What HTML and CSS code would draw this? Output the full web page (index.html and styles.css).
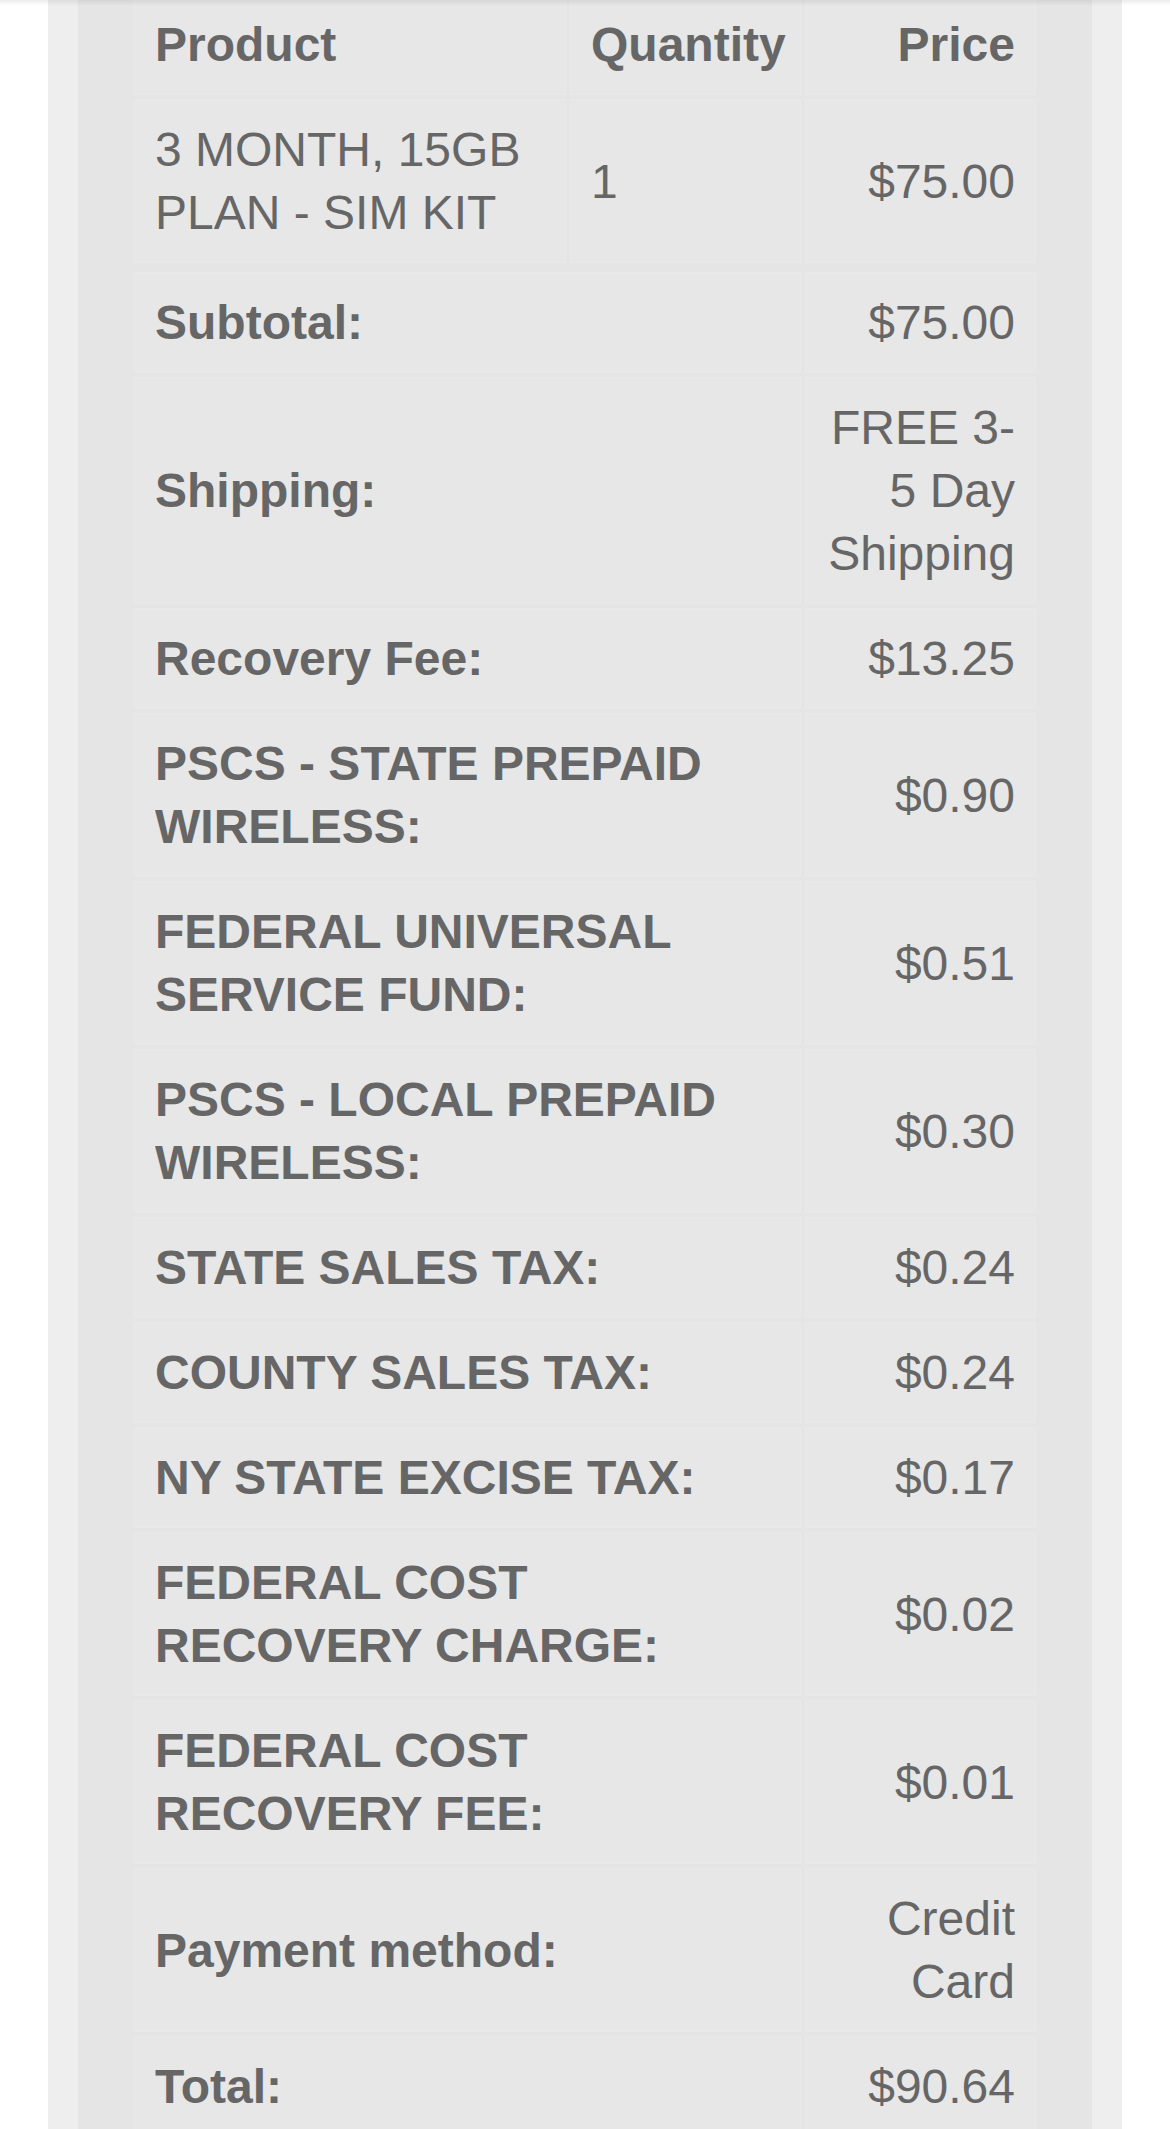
FILE: index.html
```html
<!DOCTYPE html>
<html lang="en">
<head>
    <meta charset="UTF-8">
    <meta name="viewport" content="width=device-width, initial-scale=1.0">
    <title>Order details</title>
    <link rel="stylesheet" href="styles.css">
</head>
<body>
    <!-- order details box -->
    <div class="order-box">
        <div class="order-inner">
            <table class="order-items">
                <thead>
                    <tr>
                        <th class="col-product">Product</th>
                        <th class="col-qty">Quantity</th>
                        <th class="col-price">Price</th>
                    </tr>
                </thead>
                <tbody>
                    <tr>
                        <td>3 MONTH, 15GB PLAN - SIM KIT</td>
                        <td>1</td>
                        <td class="amount">$75.00</td>
                    </tr>
                </tbody>
            </table>

            <!-- totals -->
            <table class="order-totals">
                <tr><th class="col-label">Subtotal:</th><td class="amount">$75.00</td></tr>
                <tr><th>Shipping:</th><td class="amount">FREE 3-5 Day Shipping</td></tr>
                <tr><th>Recovery Fee:</th><td class="amount">$13.25</td></tr>
                <tr><th>PSCS - STATE PREPAID WIRELESS:</th><td class="amount">$0.90</td></tr>
                <tr><th>FEDERAL UNIVERSAL SERVICE FUND:</th><td class="amount">$0.51</td></tr>
                <tr><th>PSCS - LOCAL PREPAID WIRELESS:</th><td class="amount">$0.30</td></tr>
                <tr><th>STATE SALES TAX:</th><td class="amount">$0.24</td></tr>
                <tr><th>COUNTY SALES TAX:</th><td class="amount">$0.24</td></tr>
                <tr><th>NY STATE EXCISE TAX:</th><td class="amount">$0.17</td></tr>
                <tr><th>FEDERAL COST RECOVERY CHARGE:</th><td class="amount">$0.02</td></tr>
                <tr><th>FEDERAL COST RECOVERY FEE:</th><td class="amount">$0.01</td></tr>
                <tr><th>Payment method:</th><td class="amount">Credit Card</td></tr>
                <tr><th>Total:</th><td class="amount">$90.64</td></tr>
            </table>
        </div>
    </div>
</body>
</html>
```

FILE: styles.css
```css
/* reset */
* {
    margin: 0;
    padding: 0;
    box-sizing: border-box;
}

body {
    font-family: "Liberation Sans", Arial, Helvetica, sans-serif;
    background-color: #fff;
    color: #666;
    font-size: 48px;
    line-height: 63px;
}

/* shadow of the bar above the page */
body::before {
    content: "";
    position: fixed;
    top: 0;
    left: 0;
    right: 0;
    height: 6px;
    background: linear-gradient(rgba(0, 0, 0, 0.07), rgba(0, 0, 0, 0));
    z-index: 10;
}

/* outer box */
.order-box {
    width: 1074px;
    margin: -10px auto 0;
    padding: 0 30px;
    background-color: #eeeeee;
}

.order-inner {
    background-color: #e5e5e5;
    padding: 0 52px 40px;
}

/* tables */
table {
    width: 910px;
    table-layout: fixed;
    border-collapse: separate;
    border-spacing: 4px;
}

th,
td {
    background-color: #e7e7e7;
    border: 1px solid #e9e9e9;
    padding: 18px 20px;
    vertical-align: middle;
    text-align: left;
}

th {
    font-weight: bold;
}

.col-product {
    width: 432px;
}

.col-qty {
    width: 231px;
}

.amount,
.col-price {
    text-align: right;
}

.order-totals {
    margin-top: 1px;
}

.col-label {
    width: 667px;
}
```
